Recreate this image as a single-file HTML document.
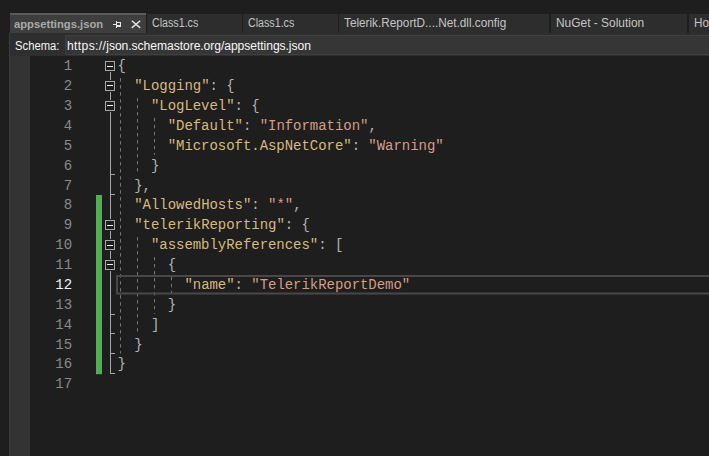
<!DOCTYPE html>
<html><head><meta charset="utf-8"><title>appsettings.json</title>
<style>
html,body{margin:0;padding:0;}
body{width:709px;height:456px;background:#1e1e1e;overflow:hidden;position:relative;font-family:"Liberation Sans",sans-serif;}
.abs{position:absolute;}
#tabbar{left:0;top:0;width:709px;height:33px;background:#1e1e1e;}
.tab{position:absolute;top:14px;height:19px;background:#2d2d2d;color:#c4c4c4;font-size:12.3px;line-height:18px;white-space:nowrap;overflow:hidden;}
.tab span{position:absolute;left:5px;top:0.4px;transform-origin:0 50%;display:inline-block;}
#t0{left:9.6px;width:136.6px;top:13px;height:20px;background:#3e3e3e;border-top:2px solid #5a5a5a;box-sizing:border-box;color:#a9a9a9;font-weight:bold;}
#t0 span{left:4.1px;top:-0.1px;font-size:11.6px;transform:scaleX(0.967);}
#strip{left:10px;top:33px;width:699px;height:23px;background:#2e2e2e;}
#strip .lbl{position:absolute;left:5.2px;top:1.7px;line-height:22px;font-size:12.3px;color:#f4f4f4;transform-origin:0 50%;transform:scaleX(0.915);}
#strip .inp{position:absolute;left:55px;top:2.2px;height:20px;width:650px;background:#363636;border:1px solid #3f3f3f;box-sizing:border-box;color:#f6f6f6;font-size:12.3px;line-height:17px;white-space:nowrap;}
#strip .inp span{position:absolute;left:1.2px;top:2.1px;display:inline-block;transform-origin:0 50%;transform:scaleX(0.986);}
#gutter{left:10px;top:56px;width:20px;height:400px;background:#333333;}
#code{left:0;top:0px;width:709px;height:456px;font-family:"Liberation Mono",monospace;font-size:14px;}
.ln{position:absolute;left:40px;width:32px;text-align:right;color:#8a8a8a;height:20px;line-height:19.87px;letter-spacing:-0.04px;}
.ln.cur{color:#f0f0f0;}
.cl{position:absolute;left:117.5px;height:20px;line-height:19.87px;white-space:pre;color:#b4b4b4;letter-spacing:-0.04px;}
.k{color:#d7ba7d;}
.s{color:#d69d85;}
.p{color:#b4b4b4;}
</style></head><body>
<div id="tabbar" class="abs">
 <div class="tab" id="t0"><span>appsettings.json</span>
  <svg style="position:absolute;left:102.4px;top:5px" width="32" height="10" viewBox="0 0 32 10" shape-rendering="crispEdges">
   <rect x="1" y="4" width="3" height="1" fill="#e4e4e4"/><rect x="4" y="1" width="1" height="7" fill="#e4e4e4"/>
   <rect x="5" y="2" width="4" height="1" fill="#e4e4e4"/><rect x="8" y="2" width="1" height="5" fill="#e4e4e4"/><rect x="5" y="5" width="4" height="2" fill="#e4e4e4"/>
   <path d="M19.8 0.7 L28.2 7.9 M28.2 0.7 L19.8 7.9" stroke="#e4e4e4" stroke-width="1.4" fill="none" shape-rendering="auto"/>
  </svg>
 </div>
 <div class="tab" style="left:146.5px;width:95px"><span style="transform:scaleX(0.868)">Class1.cs</span></div>
 <div class="tab" style="left:243px;width:94.5px"><span style="transform:scaleX(0.868)">Class1.cs</span></div>
 <div class="tab" style="left:339px;width:210px"><span style="transform:scaleX(0.957)">Telerik.ReportD....Net.dll.config</span></div>
 <div class="tab" style="left:551px;width:135.6px"><span style="transform:scaleX(0.970)">NuGet - Solution</span></div>
 <div class="tab" style="left:688.5px;width:21px"><span style="transform:scaleX(0.95)">Ho</span></div>
</div>
<div id="strip" class="abs"><div class="lbl">Schema:</div><div class="inp"><span><i style="font-style:normal;letter-spacing:0.37px">https://</i><i style="font-style:normal;letter-spacing:-0.065px">json.schemastore.org/appsettings.json</i></span></div></div>
<div id="gutter" class="abs"></div>
<div class="abs" style="left:9px;top:33px;width:1px;height:423px;background:#3c3c3c"></div>
<svg class="abs" style="left:0;top:0" width="709" height="456" viewBox="0 0 709 456" shape-rendering="crispEdges">
<rect x="96" y="195" width="6" height="179.2" fill="#54ad55" shape-rendering="auto"/>
<rect x="110" y="72" width="1" height="8" fill="#a6a6a6"/>
<rect x="110" y="92" width="1" height="8" fill="#a6a6a6"/>
<rect x="110" y="112" width="1" height="107" fill="#a6a6a6"/>
<rect x="110" y="231" width="1" height="8" fill="#a6a6a6"/>
<rect x="110" y="251" width="1" height="8" fill="#a6a6a6"/>
<rect x="110" y="271" width="1" height="103" fill="#a6a6a6"/>
<rect x="110" y="174" width="5" height="1" fill="#a6a6a6"/>
<rect x="110" y="194" width="5" height="1" fill="#a6a6a6"/>
<rect x="110" y="314" width="5" height="1" fill="#a6a6a6"/>
<rect x="110" y="333" width="5" height="1" fill="#a6a6a6"/>
<rect x="110" y="353" width="5" height="1" fill="#a6a6a6"/>
<rect x="110" y="373" width="5" height="1" fill="#a6a6a6"/>
<rect x="105.5" y="61.5" width="9" height="9" fill="#1e1e1e" stroke="#a6a6a6" stroke-width="1"/>
<rect x="107" y="66" width="6" height="1" fill="#f0f0f0"/>
<rect x="105.5" y="81.5" width="9" height="9" fill="#1e1e1e" stroke="#a6a6a6" stroke-width="1"/>
<rect x="107" y="85" width="6" height="1" fill="#f0f0f0"/>
<rect x="105.5" y="101.5" width="9" height="9" fill="#1e1e1e" stroke="#a6a6a6" stroke-width="1"/>
<rect x="107" y="105" width="6" height="1" fill="#f0f0f0"/>
<rect x="105.5" y="220.5" width="9" height="9" fill="#1e1e1e" stroke="#a6a6a6" stroke-width="1"/>
<rect x="107" y="225" width="6" height="1" fill="#f0f0f0"/>
<rect x="105.5" y="240.5" width="9" height="9" fill="#1e1e1e" stroke="#a6a6a6" stroke-width="1"/>
<rect x="107" y="245" width="6" height="1" fill="#f0f0f0"/>
<rect x="105.5" y="260.5" width="9" height="9" fill="#1e1e1e" stroke="#a6a6a6" stroke-width="1"/>
<rect x="107" y="264" width="6" height="1" fill="#f0f0f0"/>
<line x1="120.5" y1="78.17" x2="120.5" y2="353.45" stroke="#767676" stroke-width="1" stroke-dasharray="3.4 3.6" shape-rendering="auto"/>
<line x1="137.5" y1="98.04" x2="137.5" y2="174.62" stroke="#767676" stroke-width="1" stroke-dasharray="3.4 3.6" shape-rendering="auto"/>
<line x1="137.5" y1="237.13" x2="137.5" y2="333.58" stroke="#767676" stroke-width="1" stroke-dasharray="3.4 3.6" shape-rendering="auto"/>
<line x1="154.5" y1="117.91" x2="154.5" y2="154.75" stroke="#767676" stroke-width="1" stroke-dasharray="3.4 3.6" shape-rendering="auto"/>
<line x1="154.5" y1="257.00" x2="154.5" y2="313.71" stroke="#767676" stroke-width="1" stroke-dasharray="3.4 3.6" shape-rendering="auto"/>
<line x1="171.5" y1="276.87" x2="171.5" y2="293.84" stroke="#767676" stroke-width="1" stroke-dasharray="3.4 3.6" shape-rendering="auto"/>
<rect x="117" y="276" width="600" height="17.5" fill="none" stroke="#484848" stroke-width="2" shape-rendering="auto"/>
</svg>
<div id="code" class="abs">
<div class="ln" style="top:57.40px">1</div>
<div class="cl" style="top:57.40px"><span class="p">{</span></div>
<div class="ln" style="top:77.27px">2</div>
<div class="cl" style="top:77.27px"><span class="p">  </span><span class="k">&quot;Logging&quot;</span><span class="p">: {</span></div>
<div class="ln" style="top:97.14px">3</div>
<div class="cl" style="top:97.14px"><span class="p">    </span><span class="k">&quot;LogLevel&quot;</span><span class="p">: {</span></div>
<div class="ln" style="top:117.01px">4</div>
<div class="cl" style="top:117.01px"><span class="p">      </span><span class="k">&quot;Default&quot;</span><span class="p">: </span><span class="s">&quot;Information&quot;</span><span class="p">,</span></div>
<div class="ln" style="top:136.88px">5</div>
<div class="cl" style="top:136.88px"><span class="p">      </span><span class="k">&quot;Microsoft.AspNetCore&quot;</span><span class="p">: </span><span class="s">&quot;Warning&quot;</span></div>
<div class="ln" style="top:156.75px">6</div>
<div class="cl" style="top:156.75px"><span class="p">    }</span></div>
<div class="ln" style="top:176.62px">7</div>
<div class="cl" style="top:176.62px"><span class="p">  },</span></div>
<div class="ln" style="top:196.49px">8</div>
<div class="cl" style="top:196.49px"><span class="p">  </span><span class="k">&quot;AllowedHosts&quot;</span><span class="p">: </span><span class="s">&quot;*&quot;</span><span class="p">,</span></div>
<div class="ln" style="top:216.36px">9</div>
<div class="cl" style="top:216.36px"><span class="p">  </span><span class="k">&quot;telerikReporting&quot;</span><span class="p">: {</span></div>
<div class="ln" style="top:236.23px">10</div>
<div class="cl" style="top:236.23px"><span class="p">    </span><span class="k">&quot;assemblyReferences&quot;</span><span class="p">: [</span></div>
<div class="ln" style="top:256.10px">11</div>
<div class="cl" style="top:256.10px"><span class="p">      {</span></div>
<div class="ln cur" style="top:275.97px">12</div>
<div class="cl" style="top:275.97px"><span class="p">        </span><span class="k">&quot;name&quot;</span><span class="p">: </span><span class="s">&quot;TelerikReportDemo&quot;</span></div>
<div class="ln" style="top:295.84px">13</div>
<div class="cl" style="top:295.84px"><span class="p">      }</span></div>
<div class="ln" style="top:315.71px">14</div>
<div class="cl" style="top:315.71px"><span class="p">    ]</span></div>
<div class="ln" style="top:335.58px">15</div>
<div class="cl" style="top:335.58px"><span class="p">  }</span></div>
<div class="ln" style="top:355.45px">16</div>
<div class="cl" style="top:355.45px"><span class="p">}</span></div>
<div class="ln" style="top:375.32px">17</div>
</div>
</body></html>
